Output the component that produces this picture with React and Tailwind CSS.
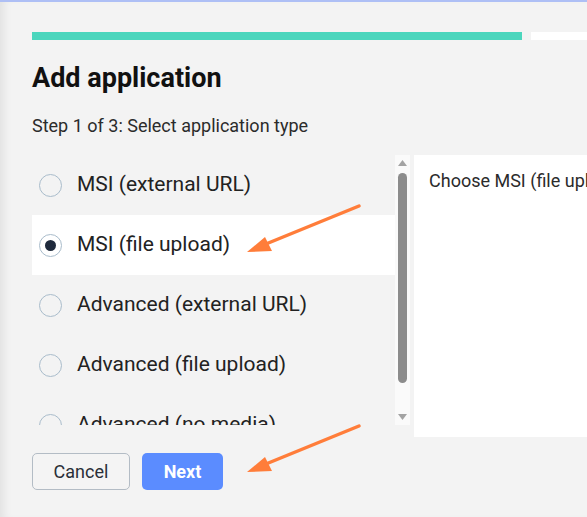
const options = [
  'MSI (external URL)',
  'MSI (file upload)',
  'Advanced (external URL)',
  'Advanced (file upload)',
  'Advanced (no media)',
]

function Radio({ checked }) {
  return (
    <span className="w-[23px] h-[23px] rounded-full border-[1.5px] border-[#a9bccb] bg-transparent flex items-center justify-center shrink-0">
      {checked && <span className="w-[11px] h-[11px] rounded-full bg-[#1f2a3c]" />}
    </span>
  )
}

function Scrollbar() {
  return (
    <div className="w-[15px] h-full bg-[#fafafa] flex flex-col items-center">
      <svg width="9" height="6" viewBox="0 0 9 6" className="mt-[5px]">
        <path d="M4.5 0L9 6H0z" fill="#a3a3a3" />
      </svg>
      <div className="w-[9px] h-[210px] mt-[7px] rounded-full bg-[#8c8c8c]" />
      <div className="flex-1" />
      <svg width="9" height="6" viewBox="0 0 9 6" className="mb-[5px]">
        <path d="M0 0H9L4.5 6z" fill="#a3a3a3" />
      </svg>
    </div>
  )
}

function Arrow({ x1, y1, x2, y2 }) {
  return (
    <g>
      <line x1={x1} y1={y1} x2={x2 + 14} y2={y2 - 6} stroke="#ff7d3a" strokeWidth="3.5" strokeLinecap="round" />
      <path d={`M${x2} ${y2} L${x2 + 18} ${y2 - 15} L${x2 + 25} ${y2 - 1} Z`} fill="#ff7d3a" />
    </g>
  )
}

export default function App() {
  const selected = 1

  return (
    <div
      className="relative w-[587px] h-[517px] overflow-hidden bg-[#f3f3f3] border-t-2 border-[#aebff5] shadow-[inset_9px_0_8px_-5px_rgba(0,0,0,0.07)]"
      style={{ fontFamily: 'Roboto, "Liberation Sans", sans-serif' }}
    >
      <div className="pl-8">
        {/* progress */}
        <div className="flex gap-[9px] mt-[30px] h-[8px]">
          <div className="w-[490px] bg-[#4bd6bd]" />
          <div className="flex-1 bg-white" />
        </div>

        <h1 className="mt-[22px] text-[27px] leading-[32px] font-bold text-[#111]">Add application</h1>
        <p className="mt-[22px] text-[18px] leading-[20px] text-[#2b2b2b]">Step 1 of 3: Select application type</p>

        <div className="flex items-start mt-[19px]">
          <div className="flex h-[270px]">
            <div className="w-[363px] h-full overflow-hidden">
              {options.map((label, i) => (
                <div
                  key={label}
                  className={`h-[60px] flex items-center gap-[15px] pl-[7px] ${i === selected ? 'bg-white' : ''}`}
                >
                  <Radio checked={i === selected} />
                  <span className="text-[21px] text-[#222]">{label}</span>
                </div>
              ))}
            </div>
            <Scrollbar />
          </div>
          <div className="ml-[4px] flex-1 h-[282px] bg-white pl-[15px] pt-[15px] overflow-hidden">
            <p className="text-[18px] leading-[22px] text-[#2b2b2b] whitespace-nowrap">Choose MSI (file upload) to upload</p>
          </div>
        </div>

        <div className="flex gap-3 mt-[16px]">
          <button className="w-[98px] h-[37px] rounded-[5px] border border-[#b3bcc5] bg-[#f4f4f4] text-[18px] text-[#2a2f38]">
            Cancel
          </button>
          <button className="w-[81px] h-[37px] rounded-[5px] bg-[#5b8cff] text-[18px] font-bold text-white">
            Next
          </button>
        </div>
      </div>

      {/* callout arrows */}
      <svg className="absolute left-0 top-0 pointer-events-none" width="587" height="517" viewBox="0 -2 587 517">
        <Arrow x1={359} y1={202} x2={247} y2={248} />
        <Arrow x1={359} y1={422} x2={247} y2={468} />
      </svg>
    </div>
  )
}
